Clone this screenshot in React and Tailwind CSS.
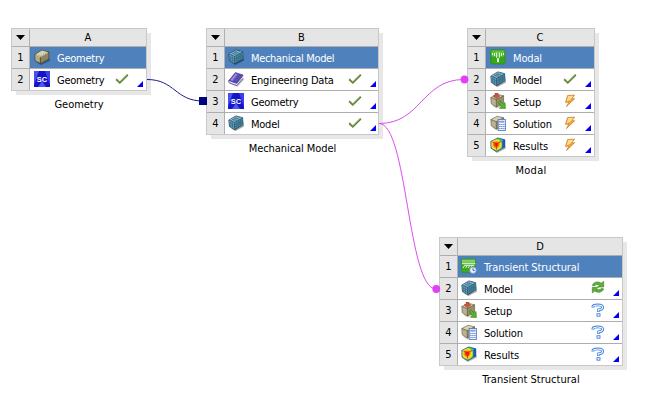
import React, { useId } from "react";

function GeometryIcon() {
  return (
    <>
      <path d="M2 13 7 16.2 16 12V9L6 13Z" fill="#1b2638" opacity=".4" />
      <g stroke="#4a442a" strokeWidth=".7" strokeLinejoin="round">
        <path d="M.8 5.4 8 1 14.8 3 6.4 7.8Z" fill="#d8d1b0" />
        <path d="M.8 5.4 6.4 7.8V14.6L1 11.4Z" fill="#b5ad88" />
        <path d="M6.4 7.8 14.8 3V10L6.4 14.6Z" fill="#8d8561" />
      </g>
      <path d="M1.6 5.7 6.4 7.8 14 3.5" fill="none" stroke="#eee8ce" strokeWidth=".8" />
    </>
  );
}

function ScIcon() {
  return (
    <>
      <path d="M0 0h16v16H0Z" fill="#1414c8" />
      <path d="M0 0h5L0 14Z" fill="#4a4ff0" />
      <path d="M11 0h5v14Z" fill="#3a40ee" />
      <path d="M4 16 8 10 12 16Z" fill="#4c55f6" />
      <text x="8" y="10.6" textAnchor="middle" textLength="10.4" lengthAdjust="spacingAndGlyphs" fontSize="7.6" fontWeight="700" fill="#fff" fontFamily="Liberation Sans, sans-serif">SC</text>
    </>
  );
}

function ModelIcon() {
  return (
    <>
      <path d="M3 13.4 7.5 16 16 11.4V9.5Z" fill="#000" opacity=".35" />
      <path d="M.8 5 7.8.9 14.6 2.6 15.2 9.6 6.8 14.8 1.4 11.6Z" fill="#26495b" stroke="#26495b" strokeWidth=".7" strokeLinejoin="round" />
      <path d="M1.2 4.9 7.8 1.2l6.4 1.6L6.6 7Z" fill="#8cc2da" />
      <path d="M1.1 5.5 6.3 7.6v6.6l-4.6-2.9Z" fill="#67a8c7" />
      <path d="M6.9 7.5 14.5 3.3l.2 6.1-7.6 4.7Z" fill="#4a8dad" />
      <path d="M3.4 3.7 8.9 5.6M5.6 2.5l5.6 1.9M2.9 5.9 9.5 1.7M4.7 6.5 12 2.2M2.8 6.2v5.8M4.6 7v6M1.3 7.6l5.4 2.4 8-4.5M1.5 9.5l5.3 2.7 7.9-4.8M8.9 6.4v6.5M10.9 5.3v6.4M12.8 4.3v6.3" fill="none" stroke="#2a566d" strokeWidth=".5" />
    </>
  );
}

function BookIcon() {
  return (
    <>
      <path d="M2 12.5 9.5 16 16 9V7.5Z" fill="#000" opacity=".2" />
      <path d="M.8 9.5 7.4 1.6 15 4 8.8 12Z" fill="#5a4db0" stroke="#3a2e88" strokeWidth=".6" strokeLinejoin="round" />
      <path d="M2 9.3 7.7 2.5l2.1.6-5.4 7Z" fill="#968cd8" />
      <path d="M1.1 9.9 8.8 12.6 15 4.8v2l-6.2 7.6-7.5-2.6Z" fill="#eceaf8" />
      <path d="M1 9.5C.3 10.6.6 11.7 1.5 12l7.3 2.6 6.4-7.4M.9 9.6l7.9 2.8L15 4.6" fill="none" stroke="#43369a" strokeWidth=".8" />
    </>
  );
}

function ModalIcon() {
  return (
    <>
      <rect x=".8" y=".8" width="14.2" height="14.2" rx="1.5" fill="#35a81a" stroke="#2a8a14" strokeWidth=".7" />
      <path d="M1.4 1.4h13v6.2h-13Z" fill="#6fcc48" opacity=".7" />
      <path d="M2.5 4v2M4.5 4v3M13.5 4v2M11.5 4v3" stroke="#f1fbea" />
      <path d="M6.6 3.5V8.5L7.5 9.5V13h1V9.5l.9-1V3.5" fill="none" stroke="#f8fff4" strokeWidth=".9" />
    </>
  );
}

function TransientIcon() {
  return (
    <>
      <rect x=".5" y="1" width="14" height="13.6" rx="1.5" fill="#3fa722" stroke="#32901a" strokeWidth=".7" />
      <path d="M1 1.6h13v3.2H1Z" fill="#7fd25c" />
      <path d="M1 5.2h13.4v1H1Z" fill="#f1fbec" />
      <path d="m2 10 1.6-2.6M4.6 10l1.6-2.6M7.2 10l1.6-2.6M9.8 10l1.6-2.6M3.4 7.3h10" fill="none" stroke="#f4fcf0" strokeWidth=".9" />
      <circle cx="12" cy="12.2" r="3.3" fill="#eaf0ff" stroke="#7b90d8" strokeWidth=".9" />
      <path d="M12 10.2v2.2h1.8" fill="none" stroke="#3f56ac" strokeWidth=".9" />
    </>
  );
}

function Solid() {
  return (
    <>
      <path d="M2 12.6 6.5 15.6 14 12V9.5Z" fill="#000" opacity=".2" />
      <g stroke="#615a40" strokeWidth=".6" strokeLinejoin="round">
        <path d="M.8 4.6 7 1.2 13.6 2.8 6.4 6.8Z" fill="#d6cfb0" />
        <path d="M.8 4.6 6.4 6.8V14L1.2 10.8Z" fill="#bab291" />
        <path d="M6.4 6.8 13.6 2.8V10L6.4 14Z" fill="#958d6b" />
      </g>
    </>
  );
}

function SetupIcon() {
  return (
    <>
      <Solid />
      <path d="M5 .1h3v2.7h2L6.5 6 3 2.8h2Z" fill="#cb5a3c" stroke="#93371f" strokeWidth=".5" />
      <path d="m8.3 9.4 1.6-1.5 3.3 3.1 1.8-1.5.4 6-6-.3 1.8-1.6Z" fill="#57b52b" stroke="#2f7a13" strokeWidth=".6" />
    </>
  );
}

function SolutionIcon() {
  return (
    <>
      <Solid />
      <rect x="8.2" y="4.5" width="7.2" height="11" fill="#eef3ff" stroke="#5b7dc2" strokeWidth=".9" />
      <path d="M9.2 5.8h5.2v1.8H9.2Z" fill="#7da0e0" />
      <path d="M9.3 9.5h5.2M9.3 11.5h5.2M9.3 13.5h5.2" stroke="#5478c2" strokeWidth="1.1" strokeDasharray="1.2 .8" />
    </>
  );
}

function ResultsIcon() {
  const gradient = useId();
  return (
    <>
      <defs>
        <radialGradient id={gradient} gradientUnits="userSpaceOnUse" cx="6.2" cy="7.6" r="9">
          <stop offset="0" stopColor="#d81808" />
          <stop offset=".2" stopColor="#f0401a" />
          <stop offset=".36" stopColor="#fbb01a" />
          <stop offset=".52" stopColor="#f2ee22" />
          <stop offset=".68" stopColor="#3ccf3a" />
          <stop offset=".84" stopColor="#1fb4c4" />
          <stop offset="1" stopColor="#1b34cc" />
        </radialGradient>
      </defs>
      <path d="M2 12.6 7 16 15.8 11.4V9.5Z" fill="#000" opacity=".3" />
      <path d="M.8 4.4 7.8.9 14.8 2.8V10L6.6 14.6 1 11.2Z" fill={`url(#${gradient})`} stroke="#24408a" strokeWidth=".7" strokeLinejoin="round" />
      <path d="M14.6 3v6.9l-2.4 1.3V4.3Z" fill="#1d38d0" opacity=".75" />
      <path d="M2.5 5 6.5 7 11 4.6M6.500 7v5.500" fill="none" stroke="#d81808" strokeWidth="1.1" opacity=".75" />
    </>
  );
}

function CheckIcon() {
  return (
    <>
      <path d="M2.2 8.2 5.8 11.6 13.8 3.8" fill="none" stroke="#5d7f36" strokeWidth="1.9" />
      <path d="M2.5 7.9 5.8 11 13.4 3.6" fill="none" stroke="#9ab872" strokeWidth=".7" />
    </>
  );
}

function BoltIcon() {
  return (
    <>
      <path d="M5.6 2.5 12.6 2.1 9.8 5.8l2.900-.1-8.300 7.900 2.500-4.500-3.400.3Z" fill="#f0a234" stroke="#c97b28" strokeWidth=".7" strokeLinejoin="round" />
      <path d="M6.300 3.100 11.400 2.700 8.600 6.400 4.700 8.600Z" fill="#ffdf96" />
    </>
  );
}

function RefreshIcon() {
  return (
    <g fill="#62ad3a" stroke="#3a8120" strokeWidth=".6" strokeLinejoin="round">
      <path d="M2.3 5.4C3.4 1.8 8.2.9 11.2 3.2L13.7 1.3V7H7.6l2-1.9C7.6 4 5.6 4.3 5 5.6Z" />
      <path d="M13.7 8.8c-1.1 3.6-5.9 4.5-8.9 2.2L2.3 12.9V7.2h6.1l-2 1.9c2 1.1 4 .8 4.6-.5Z" />
    </g>
  );
}

function QuestionIcon() {
  return (
    <>
      <path d="M3 5.6V4.600C3 3.200 5 2.900 7.800 2.900c3.200 0 4.800.8 4.800 2.400S10.800 7.800 8.500 8v2" fill="none" stroke="#4480d8" strokeWidth="2.9" />
      <path d="M3 4.900v-.2c0-1.200 2-1.700 4.800-1.700 3.200 0 4.800.8 4.800 2.300S10.800 7.700 8.300 7.900v1.500" fill="none" stroke="#f3f8ff" strokeWidth="1.1" />
      <rect x="7" y="11.7" width="3" height="2.5" fill="#f3f8ff" stroke="#4480d8" strokeWidth=".9" />
    </>
  );
}

const ICONS = {
  geometry: GeometryIcon,
  sc: ScIcon,
  model: ModelIcon,
  book: BookIcon,
  modal: ModalIcon,
  transient: TransientIcon,
  setup: SetupIcon,
  solution: SolutionIcon,
  results: ResultsIcon,
  check: CheckIcon,
  bolt: BoltIcon,
  refresh: RefreshIcon,
  question: QuestionIcon,
};

function Icon({ name }) {
  const Drawing = ICONS[name];
  return (
    <svg viewBox="0 0 16 16" className="size-4 shrink-0">
      <Drawing />
    </svg>
  );
}

const SYSTEMS = [
  {
    id: "A",
    frame: "left-[11px] top-[28px] w-[136px]",
    shadow: "left-[16px] top-[33px] w-[135px] h-[62px]",
    iconPad: "pl-[4px]",
    statusPad: "mr-[3px]",
    caption: "Geometry",
    captionClass: "tracking-[-0.04px]",
    rows: [
      ["geometry", "Geometry", "tracking-[-0.25px]"],
      ["sc", "Geometry", "tracking-[-0.25px]", "check"],
    ],
  },
  {
    id: "B",
    frame: "left-[206px] top-[28px] w-[173px]",
    shadow: "left-[211px] top-[33px] w-[172px] h-[106px]",
    iconPad: "pl-[3px]",
    statusPad: "mr-[2px]",
    caption: "Mechanical Model",
    captionClass: "tracking-[-0.06px]",
    rows: [
      ["model", "Mechanical Model", "tracking-[-0.33px]"],
      ["book", "Engineering Data", "tracking-[-0.22px]", "check"],
      ["sc", "Geometry", "tracking-[-0.25px]", "check"],
      ["model", "Model", "tracking-[-0.25px]", "check"],
    ],
  },
  {
    id: "C",
    frame: "left-[467px] top-[28px] w-[128px]",
    shadow: "left-[472px] top-[33px] w-[127px] h-[128px]",
    iconPad: "pl-[4px]",
    statusPad: "mr-[3px]",
    caption: "Modal",
    captionClass: "tracking-[0.3px]",
    rows: [
      ["modal", "Modal", "tracking-[-0.15px]"],
      ["model", "Model", "tracking-[-0.2px]", "check"],
      ["setup", "Setup", "tracking-[-0.15px]", "bolt"],
      ["solution", "Solution", "tracking-[-0.2px]", "bolt"],
      ["results", "Results", "tracking-[-0.08px]", "bolt"],
    ],
  },
  {
    id: "D",
    frame: "left-[439px] top-[237px] w-[184px]",
    shadow: "left-[444px] top-[242px] w-[183px] h-[128px]",
    iconPad: "pl-[3px]",
    statusPad: "mr-[3px]",
    caption: "Transient Structural",
    captionClass: "tracking-[0.01px]",
    rows: [
      ["transient", "Transient Structural", "tracking-[-0.08px]"],
      ["model", "Model", "tracking-[-0.2px]", "refresh"],
      ["setup", "Setup", "tracking-[-0.15px]", "question"],
      ["solution", "Solution", "tracking-[-0.2px]", "question"],
      ["results", "Results", "tracking-[-0.08px]", "question"],
    ],
  },
];

function SystemRow({ system, row, index }) {
  const [icon, label, tracking, status] = row;
  return (
    <div className="flex h-[22px] border-b border-[#adadad] last:border-[#c8c8c8]">
      <div className="flex w-[18px] shrink-0 items-center justify-center border-r border-[#b0b0b0] bg-[#e5e5e5]">
        {index + 1}
      </div>
      <div className={`flex min-w-0 grow items-center pb-px ${system.iconPad} ${index === 0 ? "bg-[#4f81bd] text-white" : "bg-white"}`}>
        <Icon name={icon} />
        <span className={`mt-[4px] ml-[7px] grow whitespace-nowrap ${tracking}`}>{label}</span>
        {status && <Icon name={status} />}
        {status && (
          <svg viewBox="0 0 6 6" className={`mb-[2px] ml-[7px] size-[6px] shrink-0 self-end ${system.statusPad}`}>
            <path d="M6 0v6H0Z" fill="#0000fa" />
          </svg>
        )}
      </div>
    </div>
  );
}

function SystemBlock({ system }) {
  return (
    <>
      <div className={`absolute bg-[#e7e7e7] ${system.shadow}`} />
      <div className={`absolute ${system.frame}`}>
        <div className="border border-b-0 border-[#c8c8c8]">
          <div className="flex h-[18px] border-b border-[#adadad] bg-[#e5e5e5]">
            <div className="flex w-[18px] shrink-0 items-center justify-center border-r border-[#b0b0b0]">
              <svg viewBox="0 0 9 5" className="h-[5px] w-[9px]">
                <path d="M0 0h9L4.5 5Z" fill="#000" />
              </svg>
            </div>
            <div className="flex grow items-center justify-center">{system.id}</div>
          </div>
          {system.rows.map((row, index) => (
            <SystemRow key={index} system={system} row={row} index={index} />
          ))}
        </div>
        <div className={`mt-[7px] text-center whitespace-nowrap ${system.captionClass}`}>{system.caption}</div>
      </div>
    </>
  );
}

function Connections() {
  return (
    <svg viewBox="0 0 668 403" className="absolute inset-0 h-[403px] w-[668px]" fill="none">
      <path d="M147 79.5C175 79.5 175 101 203 101" stroke="#1c1c8c" />
      <path d="M199 97h8v8h-8Z" fill="#000080" />
      <g stroke="#dc4cf0">
        <path d="M379 123.5C421.5 123.5 421.5 79.5 464 79.5" />
        <path d="M379 123.5C407.5 123.5 407.5 289 436 289" />
      </g>
      <circle cx="464.5" cy="79.5" r="3.9" fill="#e040f5" />
      <circle cx="436.3" cy="289" r="3.9" fill="#e040f5" />
    </svg>
  );
}

export default function App() {
  return (
    <main className="relative h-[403px] w-[668px] overflow-hidden bg-white font-['DejaVu_Sans_Condensed','DejaVu_Sans',sans-serif] text-[11px] leading-[14px] text-black">
      {SYSTEMS.map((system) => (
        <SystemBlock key={system.id} system={system} />
      ))}
      <Connections />
    </main>
  );
}
